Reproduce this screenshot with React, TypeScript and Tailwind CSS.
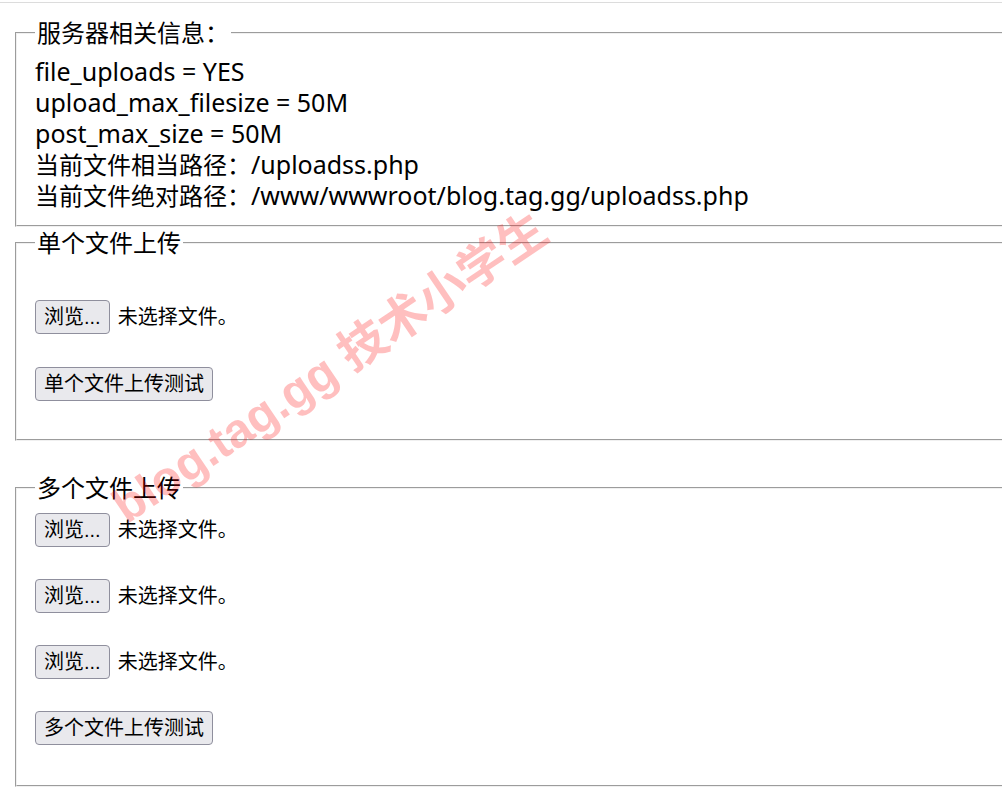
import React from 'react';

const font = { fontFamily: '"Noto Sans", "Noto Sans CJK SC", sans-serif' };
const markFont = { fontFamily: '"Liberation Sans", "Noto Sans CJK SC", sans-serif' };

const serverInfo = [
  { label: '', value: 'file_uploads = YES' },
  { label: '', value: 'upload_max_filesize = 50M' },
  { label: '', value: 'post_max_size = 50M' },
  { label: '当前文件相当路径：', value: '/uploadss.php' },
  { label: '当前文件绝对路径：', value: '/www/wwwroot/blog.tag.gg/uploadss.php' },
];

function FxButton({ children }: { children: React.ReactNode }) {
  return (
    <button
      type="button"
      className="flex h-[34px] items-center rounded-[4px] border border-[#8f8f9d] bg-[#e9e9ed] px-[8px] text-[20px] leading-[26px] text-black"
      style={markFont}
    >
      {children}
    </button>
  );
}

function FileRow() {
  return (
    <div className="flex items-center gap-[8px] text-[20px]" style={markFont}>
      <FxButton>浏览...</FxButton>
      <span>未选择文件。</span>
    </div>
  );
}

export default function App() {
  return (
    <div className="relative min-h-[802px] w-full overflow-hidden bg-white text-black" style={font}>
      <div className="h-[2px]" />
      <div className="border-t border-[#dcdcdc]" />

      <div className="w-[1100px] pl-[15px] pt-[14px]">
        <fieldset className="border-2 border-[#f0f0f0] px-[18px] pt-[8px] pb-[14px] [border-style:groove]">
          <legend className="px-[2px] text-[24px] leading-[31px]">服务器相关信息：</legend>
          {serverInfo.map((line) => (
            <div key={line.value} className="text-[24px] leading-[31px]">
              {line.label}
              <span className="text-[25px]">{line.value}</span>
            </div>
          ))}
        </fieldset>

        <fieldset className="border-2 border-[#f0f0f0] px-[18px] pt-[8px] pb-[38px] [border-style:groove]">
          <legend className="px-[2px] text-[24px] leading-[31px]">单个文件上传</legend>
          <div className="mt-[34px] flex flex-col items-start gap-[33px]">
            <FileRow />
            <FxButton>单个文件上传测试</FxButton>
          </div>
        </fieldset>

        <fieldset className="mt-[31px] border-2 border-[#f0f0f0] px-[18px] pt-[8px] pb-[40px] [border-style:groove]">
          <legend className="px-[2px] text-[24px] leading-[31px]">多个文件上传</legend>
          <div className="mt-[2px] flex flex-col items-start gap-[32px]">
            <FileRow />
            <FileRow />
            <FileRow />
            <FxButton>多个文件上传测试</FxButton>
          </div>
        </fieldset>
      </div>

      {/* 水印 */}
      <div
        className="pointer-events-none absolute left-[330px] top-[368px] -translate-x-1/2 -translate-y-1/2 rotate-[-34deg] whitespace-nowrap text-[48px] font-bold leading-none text-[#ff0000]/25"
        style={markFont}
      >
        blog.tag.gg 技术小学生
      </div>
    </div>
  );
}
